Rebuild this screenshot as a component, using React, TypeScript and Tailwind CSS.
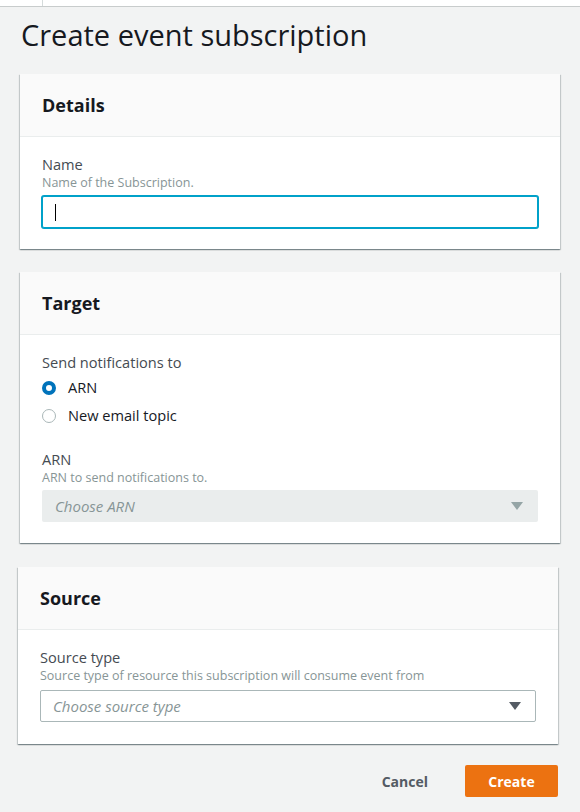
import type { ReactNode } from 'react';

const font = "font-['Open_Sans','Noto_Sans',sans-serif]";

function Card({ title, children, className = '' }: { title: string; children: ReactNode; className?: string }) {
  return (
    <section
      className={`bg-white shadow-[0_1px_1px_0_rgba(0,28,36,0.3),1px_1px_1px_0_rgba(0,28,36,0.15),-1px_1px_1px_0_rgba(0,28,36,0.15)] ${className}`}
    >
      <div className="h-[63px] bg-[#fafafa] border-b border-[#eaeded] px-[22px] flex items-center">
        <h2 className="text-[18px] font-bold text-[#16191f] leading-6">{title}</h2>
      </div>
      <div className="px-[22px] pt-[17px] pb-[21px]">{children}</div>
    </section>
  );
}

function FieldLabel({ label, hint }: { label: string; hint: string }) {
  return (
    <div>
      <div className="text-[14.6px] leading-5 text-[#454b52]">{label}</div>
      <div className="text-[12.5px] leading-4 mt-[1px] text-[#879596]">{hint}</div>
    </div>
  );
}

function Caret({ color }: { color: string }) {
  return (
    <svg width="12" height="8" viewBox="0 0 12 8" className="shrink-0">
      <polygon points="0,0 12,0 6,8" fill={color} />
    </svg>
  );
}

function Radio({ checked, label }: { checked?: boolean; label: string }) {
  return (
    <label className="h-[28px] flex items-center gap-[12px] text-[14.6px] text-[#16191f]">
      {checked ? (
        <span className="w-[14px] h-[14px] rounded-full border-[4px] border-[#0073bb] bg-white" />
      ) : (
        <span className="w-[14px] h-[14px] rounded-full border border-[#aab7b8] bg-white" />
      )}
      <span>{label}</span>
    </label>
  );
}

export default function App() {
  return (
    <div className={`min-h-screen bg-[#f2f3f3] ${font}`}>
      <div className="h-[7px] bg-white border-b border-[#c8cccc] flex">
        <div className="w-[43px] border-r border-[#d5dbdb]" />
      </div>

      <main className="px-[20px]">
        <h1 className="mt-[10px] mb-[21px] ml-[1px] text-[29px] leading-9 font-normal text-[#16191f]">
          Create event subscription
        </h1>

        <Card title="Details">
          <FieldLabel label="Name" hint="Name of the Subscription." />
          <div className="mt-[5px] h-[32px] rounded-[2px] border border-[#00a1c9] shadow-[0_0_0_1px_#00a1c9] bg-white flex items-center pl-[12px]">
            <span className="w-px h-[17px] bg-black" />
          </div>
        </Card>

        <Card title="Target" className="mt-[23px]">
          <div className="text-[14.6px] leading-5 text-[#454b52]">Send notifications to</div>
          <div className="mt-[2px]">
            <Radio checked label="ARN" />
            <Radio label="New email topic" />
          </div>
          <div className="mt-[19px]">
            <FieldLabel label="ARN" hint="ARN to send notifications to." />
          </div>
          <div className="mt-[4px] h-[32px] rounded-[2px] bg-[#eaeded] flex items-center justify-between pl-[13px] pr-[15px]">
            <span className="text-[15px] italic text-[#879596]">Choose ARN</span>
            <Caret color="#95a5a6" />
          </div>
        </Card>

        <Card title="Source" className="mt-[24px] ml-[-2px] mr-[2px]">
          <FieldLabel
            label="Source type"
            hint="Source type of resource this subscription will consume event from"
          />
          <div className="mt-[6px] mb-[1px] h-[32px] rounded-[2px] border border-[#aab7b8] bg-white flex items-center justify-between pl-[12px] pr-[14px]">
            <span className="text-[15px] italic text-[#879596]">Choose source type</span>
            <Caret color="#545b64" />
          </div>
        </Card>

        <div className="mt-[21px] pb-[15px] flex justify-end items-center mr-[2px]">
          <button className="text-[14px] font-bold text-[#545b64] mr-[37px]">Cancel</button>
          <button className="w-[93px] h-[32px] rounded-[2px] bg-[#ec7211] text-white text-[14px] font-bold">
            Create
          </button>
        </div>
      </main>
    </div>
  );
}
